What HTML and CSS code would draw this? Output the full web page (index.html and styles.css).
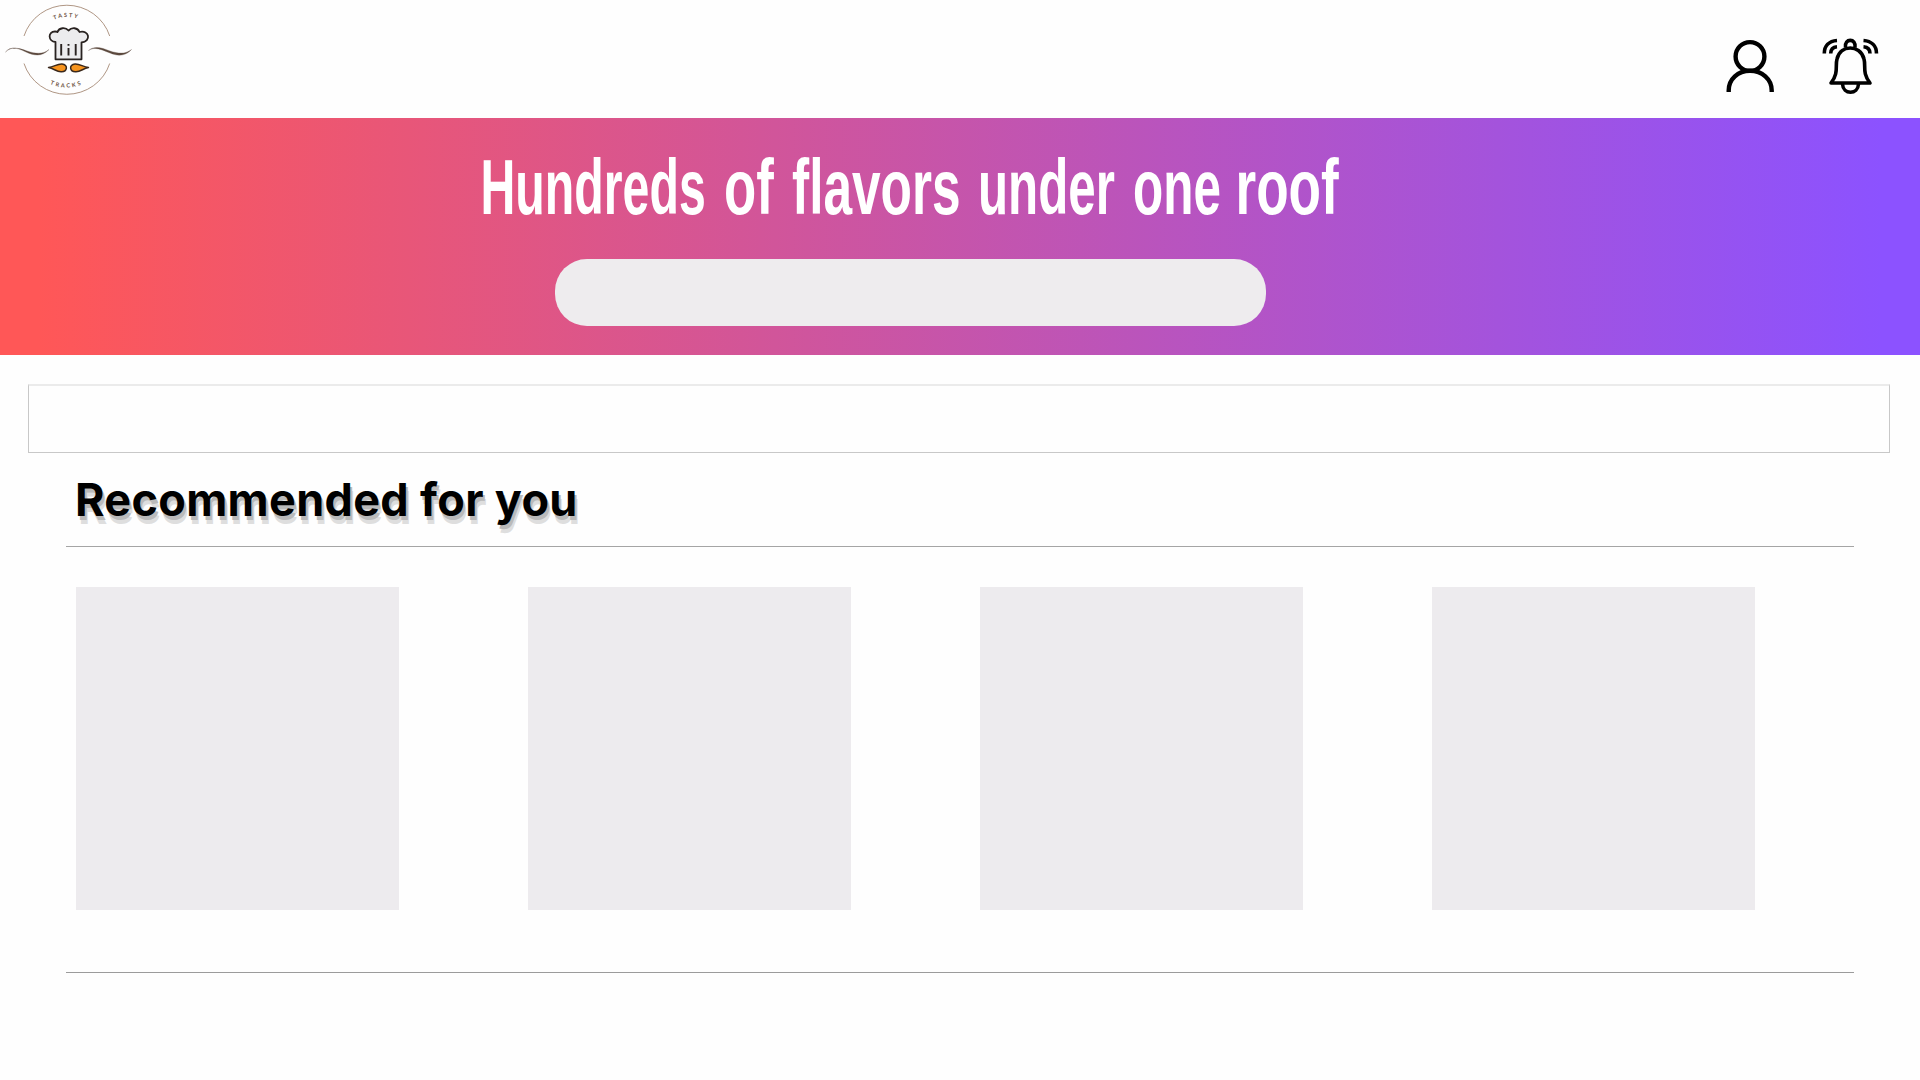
FILE: index.html
```html
<!DOCTYPE html>
<html lang="en">
<head>
<meta charset="utf-8">
<title>Tasty Tracks</title>
<link rel="stylesheet" href="styles.css">
</head>
<body>
<header class="topbar">
  <svg class="logo" viewBox="0 0 140 118" aria-label="Tasty Tracks">
    <defs>
      <path id="arc-top" d="M34 50.500 A33.500 33.500 0 0 1 101 50.500"/>
      <path id="arc-bottom" d="M27 48 A39.500 39.500 0 0 0 106 48"/>
    </defs>
    <g class="ring">
      <path d="M24 36 A45 44.300 0 0 1 109.700 36"/>
      <path d="M24 63.500 A45 44.300 0 0 0 109.700 63.500"/>
    </g>
    <path class="swirl" d="M5.500 52 C12 45 19 49 26 52 C34 55.800 42 57 49 49.500 C43 54.500 36 54 27 51 C19 48 11 46 5.500 52Z"/>
    <path class="swirl" d="M88.500 50.500 C95 46 102 50 110 53 C118 56.500 126 56 131.500 49.500 C126 54 119 54 110 51 C102 48 95 45 88.500 50.500Z"/>
    <path class="hat" d="M55.500 59.300 V42 C48 41.500 47.500 31.500 55 31.500 C56 31.500 57 31.500 57.500 32 C59 27.500 65.500 27 68.500 30.500 C72 27 77.500 27.500 79.500 32 C89.500 29.500 91.500 41.500 81.500 42.500 V59.300Z"/>
    <path class="hat-line" d="M61.200 44 V55.500 M68.500 48 V55.500 M68.500 44 V45.700 M75.700 44 V55.500"/>
    <path class="moustache" d="M48.500 67.500 C54 67 57 63.700 62 64 C68.500 64.500 67.500 72 61 71.700 C56 71.500 54 68.500 48.500 67.500Z"/>
    <path class="moustache" d="M88.500 67.500 C83 67 80 63.700 75 64 C68.500 64.500 69.500 72 76 71.700 C81 71.500 83 68.500 88.500 67.500Z"/>
    <text class="logo-text"><textPath href="#arc-top" startOffset="49%">TASTY</textPath></text>
    <text class="logo-text wide"><textPath href="#arc-bottom" startOffset="50%">TRACKS</textPath></text>
  </svg>
  <nav class="actions">
    <svg class="icon" viewBox="0 0 60 60" aria-label="Account">
      <circle cx="30" cy="20.500" r="14.400"/>
      <path d="M8.700 56 V54.500 C8.700 43 18 34.800 30 34.800 S51.700 43 51.700 54.500 V56"/>
    </svg>
    <svg class="icon bell" viewBox="0 0 60 60" aria-label="Notifications">
      <path d="M11 47 C19 37 15 30 17 23 C19 15 25 12 30.300 12 S42 15 44 23 C46 30 42 37 50 47 Z"/>
      <path d="M25.500 11.500 C24 2 36.500 2 35 11.500"/>
      <path d="M22.500 48 C23 59 38 59 38.500 48"/>
      <path d="M17 4.500 C9 5 4.300 10 4.300 17.500 M17 10.700 C13 11 10.700 13.500 10.700 17.500 M43.500 4.500 C51.500 5 56.500 10 56.500 17.500 M43.500 10.700 C47.500 11 50 13.500 50 17.500"/>
    </svg>
  </nav>
</header>
<section class="hero">
  <svg class="hero-title" viewBox="0 0 864 80" role="heading" aria-label="Hundreds of flavors under one roof">
    <text transform="translate(-1.500 62) scale(.627 1)">Hundreds</text>
    <text transform="translate(242 62) scale(.685 1)">of</text>
    <text transform="translate(310 62) scale(.668 1)">flavors</text>
    <text transform="translate(496 62) scale(.64 1)">under</text>
    <text transform="translate(651 62) scale(.642 1)">one</text>
    <text transform="translate(753.500 62) scale(.69 1)">roof</text>
  </svg>
  <div class="search"></div>
</section>
<main>
  <div class="filter-bar"></div>
  <section class="recommended">
    <h2>Recommended for you</h2>
    <div class="cards">
      <div class="card"></div>
      <div class="card"></div>
      <div class="card"></div>
      <div class="card"></div>
    </div>
  </section>
</main>
</body>
</html>
```
FILE: styles.css
```css
* { box-sizing: border-box; }
body {
  margin: 0;
  min-height: 1080px;
  background: #fefefe;
  font-family: Inter, sans-serif;
}
.topbar {
  height: 118px;
  display: flex;
  justify-content: space-between;
}
.logo { width: 140px; height: 118px; }
.ring { fill: none; stroke: #a68a76; stroke-width: 0.9; }
.swirl { fill: #5b493d; stroke: #5b493d; stroke-width: 0.3; }
.hat { fill: #ececee; stroke: #292321; stroke-width: 1.8; stroke-linejoin: round; }
.hat-line { fill: none; stroke: #292321; stroke-width: 1.9; }
.moustache { fill: #f7941e; stroke: #3a281b; stroke-width: 1.5; stroke-linejoin: round; }
.logo-text {
  font: 700 5.6px Lato, sans-serif;
  letter-spacing: 1.7px;
  text-anchor: middle;
  fill: #6b5140;
}
.logo-text.wide { letter-spacing: 2.1px; }
.actions {
  display: flex;
  gap: 40px;
  padding: 36px 40px 0 0;
}
.icon {
  width: 60px;
  height: 60px;
  fill: none;
  stroke: #000;
  stroke-width: 4.4;
}
.bell { stroke-width: 3.6; stroke-linejoin: round; }
.hero {
  height: 237px;
  padding: 34px 0 0 482px;
  background: linear-gradient(90deg, #ff5757 2%, #8c52ff 98%);
}
.hero-title {
  display: block;
  width: 864px;
  height: 80px;
  overflow: visible;
  font: 700 77px "Liberation Sans", sans-serif;
  fill: #fff;
}
.search {
  width: 711px;
  height: 67px;
  margin: 27px 0 0 73px;
  border-radius: 32px;
  background: #eeecee;
}
.filter-bar {
  height: 69px;
  margin: 29px 30px 0 28px;
  border: 1px solid #c8c8c8;
  border-top: 2px solid #ebebeb;
}
.recommended {
  height: 520px;
  margin: 0 66px;
  border-bottom: 1px solid #9b9b9b;
}
h2 {
  height: 94px;
  margin: 0;
  padding-left: 9px;
  border-bottom: 1px solid #a5a5a5;
  font-size: 45px;
  font-weight: 700;
  letter-spacing: 0.33px;
  line-height: 93px;
  text-shadow: 2px 4px 0 #bababa, 3px 8px 0 #dedede;
}
.cards {
  display: grid;
  grid-template-columns: repeat(4, 323px);
  gap: 129px;
  padding: 40px 0 0 10px;
}
.card { height: 323px; background: #edebee; }
```
